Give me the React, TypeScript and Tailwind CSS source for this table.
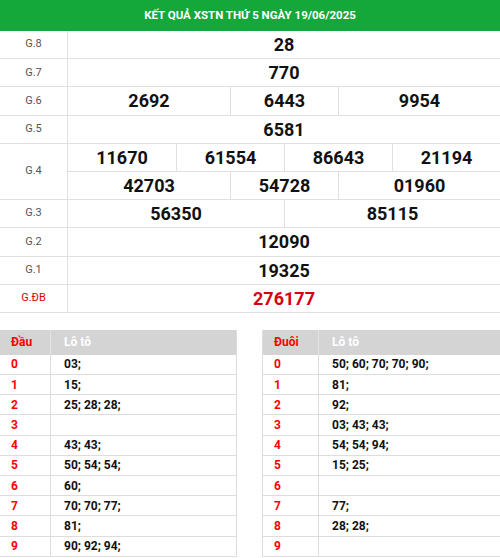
const font = { fontFamily: "Roboto, 'Liberation Sans', sans-serif" };

type Prize = { label: string; rows: { value: string; span: string }[][]; special?: boolean };

const prizes: Prize[] = [
  { label: "G.8", rows: [[{ value: "28", span: "col-span-8" }]] },
  { label: "G.7", rows: [[{ value: "770", span: "col-span-8" }]] },
  {
    label: "G.6",
    rows: [
      [
        { value: "2692", span: "col-span-3" },
        { value: "6443", span: "col-span-2" },
        { value: "9954", span: "col-span-3" },
      ],
    ],
  },
  { label: "G.5", rows: [[{ value: "6581", span: "col-span-8" }]] },
  {
    label: "G.4",
    rows: [
      [
        { value: "11670", span: "col-span-2" },
        { value: "61554", span: "col-span-2" },
        { value: "86643", span: "col-span-2" },
        { value: "21194", span: "col-span-2" },
      ],
      [
        { value: "42703", span: "col-span-3" },
        { value: "54728", span: "col-span-2" },
        { value: "01960", span: "col-span-3" },
      ],
    ],
  },
  {
    label: "G.3",
    rows: [
      [
        { value: "56350", span: "col-span-4" },
        { value: "85115", span: "col-span-4" },
      ],
    ],
  },
  { label: "G.2", rows: [[{ value: "12090", span: "col-span-8" }]] },
  { label: "G.1", rows: [[{ value: "19325", span: "col-span-8" }]] },
  { label: "G.ĐB", rows: [[{ value: "276177", span: "col-span-8" }]], special: true },
];

const dau = ["03;", "15;", "25; 28; 28;", "", "43; 43;", "50; 54; 54;", "60;", "70; 70; 77;", "81;", "90; 92; 94;"];
const duoi = ["50; 60; 70; 70; 90;", "81;", "92;", "03; 43; 43;", "54; 54; 94;", "15; 25;", "", "77;", "28; 28;", ""];

function LotoTable({ title, items, first, className }: { title: string; items: string[]; first: string; className: string }) {
  return (
    <div className={className}>
      <div className="flex h-[25px] items-center bg-[#d4d4d4] text-[12px] font-bold">
        <div className={`${first} flex h-full items-center border-r border-[#e4e4e4] pl-[11px] text-[#ff0000]`}>{title}</div>
        <div className="pl-[13px] text-white">Lô tô</div>
      </div>
      {items.map((v, i) => (
        <div key={i} className="flex h-[20.2px] items-center border-b border-[#dddddd] text-[12px] font-bold">
          <div className={`${first} flex h-full items-center border-r border-[#dddddd] pl-[11px] text-[#ff0000]`}>{i}</div>
          <div className="pl-[13px] text-[#111]">{v}</div>
        </div>
      ))}
    </div>
  );
}

export default function App() {
  return (
    <div className="w-[500px] overflow-hidden bg-white" style={font}>
      <div className="flex h-[31px] items-center justify-center bg-[#14a83b] text-[11.5px] font-bold text-white">
        KẾT QUẢ XSTN THỨ 5 NGÀY 19/06/2025
      </div>
      <div>
        {prizes.map((p) => (
          <div key={p.label} className="flex border-b border-[#e0e0e0]">
            <div
              className={`flex w-[68px] shrink-0 items-center justify-center border-r border-[#e0e0e0] text-[11px] ${
                p.special ? "text-[#e00000]" : "text-[#555]"
              }`}
            >
              {p.label}
            </div>
            <div className="flex-1">
              {p.rows.map((row, ri) => (
                <div key={ri} className={`grid grid-cols-8 ${ri > 0 ? "border-t border-[#e0e0e0]" : ""}`}>
                  {row.map((c, ci) => (
                    <div
                      key={ci}
                      className={`${c.span} flex h-[27.2px] items-center justify-center text-[18px] font-bold ${
                        ci > 0 ? "border-l border-[#e0e0e0]" : ""
                      } ${p.special ? "text-[#d6000f]" : "text-[#111]"}`}
                    >
                      {c.value}
                    </div>
                  ))}
                </div>
              ))}
            </div>
          </div>
        ))}
      </div>
      <div className="mt-[17px] flex gap-[25px]">
        <LotoTable title="Đầu" items={dau} first="w-[51px]" className="w-[237px] shrink-0 border-r border-[#dddddd]" />
        <LotoTable title="Đuôi" items={duoi} first="w-[56px]" className="w-[240px] shrink-0 border-l border-[#dddddd]" />
      </div>
    </div>
  );
}
